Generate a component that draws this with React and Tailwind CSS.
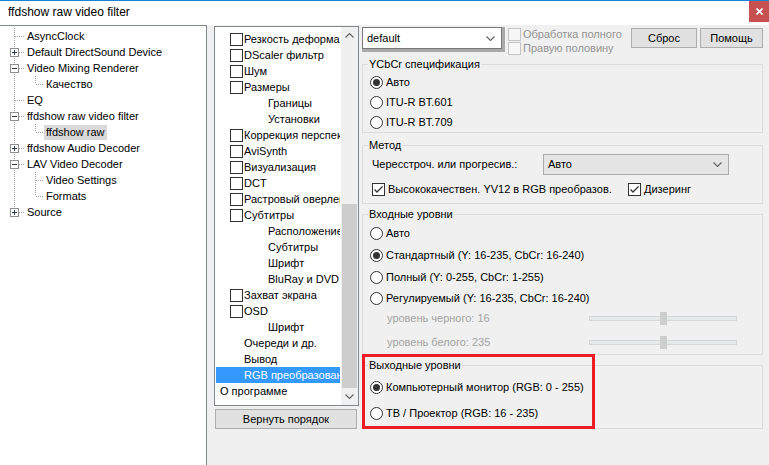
import React from 'react';

const treeNodes = [
  { depth: 0, label: 'AsyncClock' },
  { depth: 0, label: 'Default DirectSound Device', expander: '+' },
  { depth: 0, label: 'Video Mixing Renderer', expander: '-' },
  { depth: 1, label: 'Качество', last: true },
  { depth: 0, label: 'EQ' },
  { depth: 0, label: 'ffdshow raw video filter', expander: '-' },
  { depth: 1, label: 'ffdshow raw', last: true, selected: true },
  { depth: 0, label: 'ffdshow Audio Decoder', expander: '+' },
  { depth: 0, label: 'LAV Video Decoder', expander: '-' },
  { depth: 1, label: 'Video Settings' },
  { depth: 1, label: 'Formats', last: true },
  { depth: 0, label: 'Source', expander: '+', last: true },
];

const filterItems = [
  { label: 'Резкость деформации', kind: 'check' },
  { label: 'DScaler фильтр', kind: 'check' },
  { label: 'Шум', kind: 'check' },
  { label: 'Размеры', kind: 'check' },
  { label: 'Границы', kind: 'sub' },
  { label: 'Установки', kind: 'sub' },
  { label: 'Коррекция перспективы', kind: 'check' },
  { label: 'AviSynth', kind: 'check' },
  { label: 'Визуализация', kind: 'check' },
  { label: 'DCT', kind: 'check' },
  { label: 'Растровый оверлей', kind: 'check' },
  { label: 'Субтитры', kind: 'check' },
  { label: 'Расположение', kind: 'sub' },
  { label: 'Субтитры', kind: 'sub' },
  { label: 'Шрифт', kind: 'sub' },
  { label: 'BluRay и DVD', kind: 'sub' },
  { label: 'Захват экрана', kind: 'check' },
  { label: 'OSD', kind: 'check' },
  { label: 'Шрифт', kind: 'sub' },
  { label: 'Очереди и др.', kind: 'plain' },
  { label: 'Вывод', kind: 'plain' },
  { label: 'RGB преобразование', kind: 'plain', selected: true },
  { label: 'О программе', kind: 'top' },
];

const rowPadding = {
  top: 'pl-[4px]',
  check: 'pl-[14px]',
  plain: 'pl-[28px]',
  sub: 'pl-[52px]',
};

const Chevron = ({ up = false, color = '#606060' }) => (
  <svg width="9" height="5" viewBox="0 0 9 5">
    <path d={up ? 'M0.5 4.5 L4.5 0.5 L8.5 4.5' : 'M0.5 0.5 L4.5 4.5 L8.5 0.5'} fill="none" stroke={color} strokeWidth="1.1" />
  </svg>
);

const Expander = ({ sign }) => (
  <>
    <rect x="10.5" y="4.5" width="8" height="8" fill="#ffffff" stroke="#8f8f8f" />
    <line x1="12" y1="8.5" x2="17" y2="8.5" stroke="#2e3b4e" />
    {sign === '+' && <line x1="14.5" y1="6" x2="14.5" y2="11" stroke="#2e3b4e" />}
  </>
);

// dotted connectors of the device tree
const TreeConnector = ({ depth, expander, last }) => {
  const dot = { stroke: '#a0a0a0', strokeDasharray: '1 1' };
  if (depth === 0) {
    return (
      <svg width="25" height="16" className="shrink-0">
        <line x1="14.5" y1="0" x2="14.5" y2={last ? 8 : 16} {...dot} />
        <line x1="15" y1="8.5" x2="25" y2="8.5" {...dot} />
        {expander && <Expander sign={expander} />}
      </svg>
    );
  }
  return (
    <svg width="44" height="16" className="shrink-0">
      <line x1="14.5" y1="0" x2="14.5" y2="16" {...dot} />
      <line x1="35.5" y1="0" x2="35.5" y2={last ? 8 : 16} {...dot} />
      <line x1="36" y1="8.5" x2="44" y2="8.5" {...dot} />
    </svg>
  );
};

const DeviceTree = () => (
  <div className="w-[207px] shrink-0 bg-white border-t border-r border-[#828790] pt-[2px]">
    {treeNodes.map((node, i) => (
      <div key={i} className="flex h-[16px] items-center whitespace-nowrap">
        <TreeConnector depth={node.depth} expander={node.expander} last={node.last} />
        <span className={`px-[2px] leading-[15px] ${node.selected ? 'bg-[#d9d9d9]' : ''}`}>{node.label}</span>
      </div>
    ))}
  </div>
);

const CheckBox = ({ checked = false, disabled = false }) => (
  <span
    className={`w-[13px] h-[13px] shrink-0 border flex items-center justify-center ${
      disabled ? 'border-[#c4c4c4] bg-[#f7f7f7]' : 'border-[#333333] bg-white'
    }`}
  >
    {checked && (
      <svg width="11" height="11" viewBox="0 0 11 11">
        <path d="M1.5 5.5 L4 8 L9.5 2.5" fill="none" stroke="#333333" strokeWidth="1.3" />
      </svg>
    )}
  </span>
);

const Radio = ({ checked = false, label }) => (
  <div className="flex items-center whitespace-nowrap">
    <span className="w-[13px] h-[13px] shrink-0 rounded-full border border-[#333333] bg-white flex items-center justify-center">
      {checked && <span className="w-[7px] h-[7px] rounded-full bg-[#333333]" />}
    </span>
    <span className="ml-[3px]">{label}</span>
  </div>
);

const FilterList = () => (
  <div className="h-[380px] w-[145px] border border-[#828790] bg-white flex">
    <div className="flex-1 min-w-0 pt-[4px]">
      {filterItems.map((item, i) => (
        <div
          key={i}
          className={`mx-[1px] h-[16px] flex items-center overflow-hidden whitespace-nowrap ${rowPadding[item.kind]} ${
            item.selected ? 'bg-[#3399ff] text-white' : ''
          }`}
        >
          {item.kind === 'check' && (
            <span className="mr-[1px]">
              <CheckBox />
            </span>
          )}
          <span>{item.label}</span>
        </div>
      ))}
    </div>
    <div className="w-[17px] shrink-0 bg-[#f0f0f0] flex flex-col">
      <div className="h-[17px] flex items-center justify-center">
        <Chevron up />
      </div>
      <div className="flex-1 flex flex-col justify-end items-center">
        <div className="w-[15px] h-[184px] bg-[#cdcdcd]" />
      </div>
      <div className="h-[17px] flex items-center justify-center">
        <Chevron />
      </div>
    </div>
  </div>
);

const Group = ({ title, className = '', children }) => (
  <fieldset className={`border border-[#dcdcdc] ${className}`}>
    <legend className="ml-[5px] px-[1px] leading-[13px]">{title}</legend>
    {children}
  </fieldset>
);

const LevelSlider = ({ label }) => (
  <div className="flex items-center h-[18px] pl-[24px]">
    <span className="w-[202px] text-[#a3a3a3]">{label}</span>
    <div className="relative w-[148px] h-[5px] bg-[#e7eaea] border border-[#d6d6d6]">
      <div className="absolute left-[70px] top-[-5px] w-[7px] h-[13px] bg-[#cdcdcd]" />
    </div>
  </div>
);

const SettingsPanel = () => (
  <div className="relative ml-[3px] w-[401px]">
    <div className="flex h-[33px] items-start">
      <div className="mt-[2px] w-[143px] h-[25px] border-r-[3px] border-b-[3px] border-[#a9a9a9]">
        <div className="h-[22px] bg-white border border-[#7a7a7a] flex items-center justify-between pl-[4px] pr-[6px]">
          <span>default</span>
          <Chevron />
        </div>
      </div>
      <div className="ml-[3px] mt-[2px] flex flex-col text-[#939393]">
        <div className="h-[14px] flex items-center">
          <CheckBox disabled />
          <span className="ml-[2px]">Обработка полного</span>
        </div>
        <div className="h-[14px] flex items-center">
          <CheckBox disabled />
          <span className="ml-[2px]">Правую половину</span>
        </div>
      </div>
      <div className="ml-auto mt-[3px] flex gap-[3px]">
        <button className="w-[66px] h-[20px] bg-[#e1e1e1] border border-[#adadad]">Сброс</button>
        <button className="w-[63px] h-[20px] bg-[#e1e1e1] border border-[#adadad]">Помощь</button>
      </div>
    </div>

    <Group title="YCbCr спецификация" className="w-[401px]">
      <div className="pl-[7px] pt-[1px]">
        <div className="h-[20px] flex items-center"><Radio checked label="Авто" /></div>
        <div className="h-[20px] flex items-center"><Radio label="ITU-R BT.601" /></div>
        <div className="h-[20px] flex items-center"><Radio label="ITU-R BT.709" /></div>
      </div>
    </Group>

    <Group title="Метод" className="mt-[6px] w-[401px] pb-[6px]">
      <div className="mt-[2px] h-[21px] flex items-center pl-[9px]">
        <span className="w-[171px]">Чересстроч. или прогресив.:</span>
        <div className="w-[186px] h-[21px] bg-[#e5e5e5] border border-[#acacac] flex items-center justify-between pl-[4px] pr-[6px]">
          <span>Авто</span>
          <Chevron />
        </div>
      </div>
      <div className="mt-[6px] h-[16px] flex items-center pl-[9px]">
        <div className="w-[256px] flex items-center">
          <CheckBox checked />
          <span className="ml-[3px]">Высококачествен. YV12 в RGB преобразов.</span>
        </div>
        <CheckBox checked />
        <span className="ml-[3px]">Дизеринг</span>
      </div>
    </Group>

    <Group title="Входные уровни" className="mt-[4px] w-[401px] pb-[3px]">
      <div className="pl-[7px] pt-[1px]">
        <div className="h-[22px] flex items-center"><Radio label="Авто" /></div>
        <div className="h-[22px] flex items-center"><Radio checked label="Стандартный (Y: 16-235, CbCr: 16-240)" /></div>
        <div className="h-[22px] flex items-center"><Radio label="Полный (Y: 0-255, CbCr: 1-255)" /></div>
        <div className="h-[21px] flex items-center"><Radio label="Регулируемый (Y: 16-235, CbCr: 16-240)" /></div>
      </div>
      <LevelSlider label="уровень черного: 16" />
      <div className="mt-[6px]">
        <LevelSlider label="уровень белого: 235" />
      </div>
    </Group>

    <Group title="Выходные уровни" className="mt-[4px] w-[401px] pb-[2px]">
      <div className="pl-[7px] mt-[2px]">
        <div className="h-[26px] flex items-center"><Radio checked label="Компьютерный монитор (RGB: 0 - 255)" /></div>
        <div className="h-[26px] flex items-center"><Radio label="ТВ / Проектор (RGB: 16 - 235)" /></div>
      </div>
    </Group>

    {/* red frame drawn over the output levels group */}
    <div className="absolute left-0 top-[329px] w-[233px] h-[75px] border-[3px] border-[#ed1c24] pointer-events-none" />
  </div>
);

export default function App() {
  return (
    <div className="w-[769px] h-[465px] overflow-hidden bg-[#f0f0f0] flex flex-col text-[11px] text-black font-['Liberation_Sans',Arial,sans-serif]">
      <div className="h-[25px] shrink-0 bg-white border-t border-[#1883d7] flex items-start justify-between">
        <span className="pl-[8px] pt-[4px] text-[12px] leading-[15px]">ffdshow raw video filter</span>
        <div className="w-[20px] h-[21px] bg-[#c75050] flex items-center justify-center">
          <svg width="7" height="7" viewBox="0 0 7 7">
            <path d="M0.5 0.5 L6.5 6.5 M6.5 0.5 L0.5 6.5" stroke="#ffffff" strokeWidth="1.6" />
          </svg>
        </div>
      </div>
      <div className="flex flex-1 min-h-0">
        <DeviceTree />
        <div className="ml-[7px] pt-[1px] flex flex-col">
          <FilterList />
          <button className="mt-[3px] ml-[1px] w-[142px] h-[20px] bg-[#e1e1e1] border border-[#adadad]">Вернуть порядок</button>
        </div>
        <SettingsPanel />
      </div>
    </div>
  );
}
